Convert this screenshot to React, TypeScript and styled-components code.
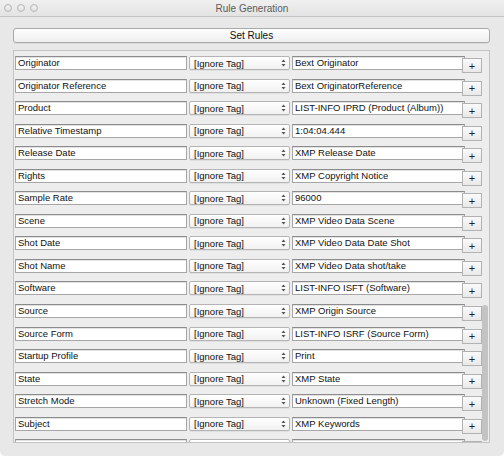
import { FC } from "react";
import styled, { createGlobalStyle } from "styled-components";

const GlobalStyle = createGlobalStyle`
    html, body {
        margin: 0;
        padding: 0;
        background: #ffffff;
    }
    * {
        box-sizing: border-box;
    }
`

// last row is only partly scrolled into view, so its texts stay hidden
const rules = [
    ["Originator", "Bext Originator"],
    ["Originator Reference", "Bext OriginatorReference"],
    ["Product", "LIST-INFO IPRD (Product (Album))"],
    ["Relative Timestamp", "1:04:04.444"],
    ["Release Date", "XMP Release Date"],
    ["Rights", "XMP Copyright Notice"],
    ["Sample Rate", "96000"],
    ["Scene", "XMP Video Data Scene"],
    ["Shot Date", "XMP Video Data Date Shot"],
    ["Shot Name", "XMP Video Data shot/take"],
    ["Software", "LIST-INFO ISFT (Software)"],
    ["Source", "XMP Origin Source"],
    ["Source Form", "LIST-INFO ISRF (Source Form)"],
    ["Startup Profile", "Print"],
    ["State", "XMP State"],
    ["Stretch Mode", "Unknown (Fixed Length)"],
    ["Subject", "XMP Keywords"],
    ["", ""],
];

const Window = styled.div`
    width: 504px;
    height: 456px;
    background: #e8e8e8;
    border-radius: 0 0 5px 5px;
    display: flex;
    flex-direction: column;
    overflow: hidden;
    font-family: "Liberation Sans", Arial, sans-serif;
    color: #111;
`

const TitleBar = styled.div`
    height: 17px;
    flex: none;
    display: flex;
    align-items: center;
    position: relative;
    background: linear-gradient(#f0f0f0, #e3e3e3);
    border-bottom: 1px solid #c4c4c4;
`

const Lights = styled.div`
    display: flex;
    gap: 5px;
    padding-left: 4px;
`

const Light = styled.span`
    width: 8px;
    height: 8px;
    border-radius: 50%;
    border: 1px solid #b9b9b9;
    background: radial-gradient(circle at 50% 35%, #f4f4f4, #d6d6d6);
`

const Title = styled.div`
    position: absolute;
    left: 0;
    right: 0;
    text-align: center;
    font-size: 10px;
    color: #5c5c5c;
`

const Content = styled.div`
    flex: 1;
    display: flex;
    flex-direction: column;
    gap: 7px;
    padding: 11px 14px 13px 13px;
    min-height: 0;
`

const SetRulesButton = styled.button`
    height: 15px;
    padding: 0;
    border: 1px solid #a9a9a9;
    border-radius: 3px;
    background: linear-gradient(#fefefe, #efefef);
    box-shadow: 0 1px 0 rgba(0,0,0,0.06);
    font-family: inherit;
    font-size: 10px;
    color: #111;
`

const Panel = styled.div`
    flex: 1;
    position: relative;
    border: 1px solid #c3c3c3;
    background: #ededed;
    overflow: hidden;
    padding: 5px 0 0 1px;
`

const Row = styled.div`
    height: 22.56px;
    display: flex;
    align-items: flex-start;
`

const Field = styled.div<{ $width: number }>`
    width: ${p => p.$width}px;
    height: 14px;
    flex: none;
    background: #fff;
    border: 1px solid #a6a6a6;
    border-top-color: #8c8c8c;
    box-shadow: inset 0 1px 0 #e2e2e2;
    font-size: 9.5px;
    line-height: 12px;
    padding-left: 2px;
    white-space: nowrap;
    overflow: hidden;
`

const Select = styled.div`
    width: 101px;
    height: 14px;
    flex: none;
    margin: 0 2px;
    display: flex;
    align-items: center;
    justify-content: space-between;
    padding: 0 3px 0 4px;
    border: 1px solid #b4b4b4;
    border-radius: 2px;
    background: linear-gradient(#ffffff, #f1f1f1);
    box-shadow: 0 1px 0 rgba(0,0,0,0.05);
    font-size: 9.5px;
`

const PlusButton = styled.div`
    width: 20px;
    height: 15px;
    flex: none;
    margin: 2px 0 0 -3px;
    position: relative;
    display: flex;
    align-items: center;
    justify-content: center;
    border: 1px solid #b2b2b2;
    background: linear-gradient(#fafafa, #e9e9e9);
    font-size: 11px;
    color: #222;
`

const ScrollThumb = styled.div`
    position: absolute;
    right: 1px;
    top: 254px;
    width: 6px;
    height: 136px;
    border-radius: 3px;
    background: #c3c3c3;
`

const Arrows: FC = () => (
    <svg width="5" height="8" viewBox="0 0 5 8">
        <path d="M2.5 0.5 L4.5 3 L0.5 3 Z M2.5 7.5 L4.5 5 L0.5 5 Z" fill="#555" />
    </svg>
);

const App: FC = () => {
    return (
        <>
            <GlobalStyle />
            <Window>
                <TitleBar>
                    <Lights>
                        <Light />
                        <Light />
                        <Light />
                    </Lights>
                    <Title>Rule Generation</Title>
                </TitleBar>
                <Content>
                    <SetRulesButton>Set Rules</SetRulesButton>
                    <Panel>
                        {rules.map(([name, value], i) => (
                            <Row key={i}>
                                <Field $width={172}>{name}</Field>
                                <Select>
                                    <span>{name ? "[Ignore Tag]" : ""}</span>
                                    <Arrows />
                                </Select>
                                <Field $width={173}>{value}</Field>
                                <PlusButton>{name ? "+" : ""}</PlusButton>
                            </Row>
                        ))}
                        <ScrollThumb />
                    </Panel>
                </Content>
            </Window>
        </>
    );
}

export default App;
